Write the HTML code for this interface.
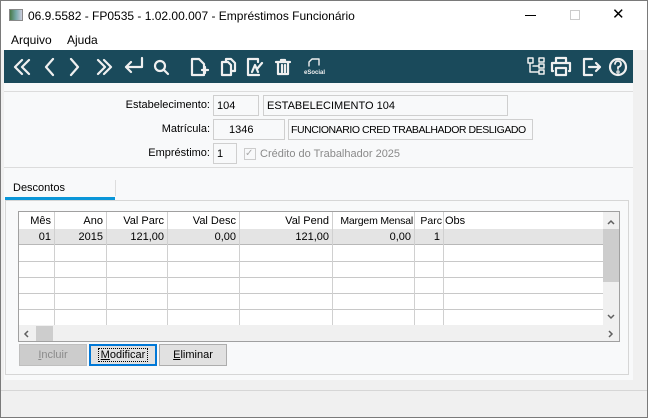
<!DOCTYPE html>
<html><head><meta charset="utf-8"><style>
*{margin:0;padding:0;box-sizing:border-box}
body{width:648px;height:418px;overflow:hidden;background:#f0f0f0;font-family:"Liberation Sans",sans-serif;font-size:12px;color:#000;position:relative}
.a{position:absolute;white-space:nowrap}
.win{left:0;top:0;width:648px;height:418px;border:1px solid #7a7a7a}
.inp{position:absolute;white-space:nowrap;overflow:hidden;background:#f8f9fa;border:1px solid #cfcfcf;height:21px;line-height:20px;padding-left:3px;font-size:11px}
.lbl{position:absolute;white-space:nowrap;text-align:right;font-size:11px;line-height:21px}
.cell{position:absolute;white-space:nowrap;font-size:11px;text-align:right;padding-right:3px}
.btn{position:absolute;top:344px;height:22px;width:68px;border:1px solid #adadad;background:#e1e1e1;text-align:center;line-height:20px;font-size:11px}
svg{position:absolute}
</style></head><body>
<div class="a" style="left:0;top:0;width:648px;height:30px;background:#fff"></div>
<div class="a" style="left:9px;top:9px;width:14px;height:12px;background:linear-gradient(90deg,#4a7a4a,#7aa,#ccd);border:1px solid #888"></div>
<div class="a" style="left:28px;top:9px;font-size:12px">06.9.5582 - FP0535 - 1.02.00.007 - Empréstimos Funcionário</div>
<div class="a" style="left:525px;top:15px;width:11px;height:1px;background:#000"></div>
<div class="a" style="left:570px;top:10px;width:10px;height:10px;border:1px solid #ccc"></div>
<div class="a" style="left:612px;top:5px;font-size:15px">✕</div>
<div class="a" style="left:0;top:30px;width:648px;height:20px;background:#fff"></div>
<div class="a" style="left:11px;top:33px">Arquivo</div>
<div class="a" style="left:67px;top:33px">Ajuda</div>
<div class="a" style="left:4px;top:50px;width:629px;height:33px;background:#1a4a5b"></div>
<svg width="648" height="83" style="left:0;top:0" fill="none" stroke="#f0f0f0" stroke-width="2.2" stroke-linecap="round" stroke-linejoin="round">
<path d="M22 60l-7 7 7 7M29 60l-7 7 7 7M53 59l-7 8 7 8M71 59l7 8-7 8M98 60l7 7-7 7M104 60l7 7-7 7M142 58v9h-16M131 62l-5 5 5 5"/>
<circle cx="160" cy="66" r="5"/><path d="M164 70l4 4"/>
<path d="M199 59h-7v16h12v-11l-5-5zM205 67v6M202 70h6"/>
<path d="M222 62h6l3 3v10h-9zM226 62v-3h5l4 4v8h-4"/>
<path d="M258 62v-3h-10v16h11M252 72l3-7 3 7M262 63l-5 6"/>
<path d="M276 62h14M281 62v-2h4v2M278 62v12h10v-12M282 65v7M285 65v7"/>
<path d="M309 66v-4l3-3h7v6" stroke-width="1.4"/>
<path d="M528 58h5v5h-5zM539 58h5v4h-5zM539 64h5v4h-5zM539 70h5v4h-5zM530 63v9h9M533 66h6" stroke-width="1.5"/>
<path d="M556 62v-4h10v4M553 71h-1v-8h18v8h-1M556 68h10v7h-10z"/>
<path d="M592 59h-8v16h8M589 67h11M596 63l4 4-4 4"/>
<circle cx="618" cy="67" r="8"/><path d="M615 64a3 3 0 1 1 3 3v2" stroke-width="1.8"/><circle cx="618" cy="72" r=".6"/>
</svg>
<div class="a" style="left:304px;top:70px;color:#f0f0f0;font-size:6px;font-weight:bold">eSocial</div>
<div class="a" style="left:4px;top:83px;width:629px;height:297px;background:#f8f9fa"></div>
<div class="a" style="left:4px;top:91px;width:629px;height:1px;background:#dcdcdc"></div>
<div class="a" style="left:4px;top:167px;width:629px;height:1px;background:#dcdcdc"></div>
<div class="lbl" style="left:100px;top:95px;width:110px">Estabelecimento:</div>
<div class="inp" style="left:213px;top:95px;width:46px">104</div>
<div class="inp" style="left:263px;top:95px;width:245px">ESTABELECIMENTO 104</div>
<div class="lbl" style="left:100px;top:119px;width:110px">Matrícula:</div>
<div class="inp" style="left:213px;top:119px;width:72px;padding-left:15px">1346</div>
<div class="inp" style="left:288px;top:119px;width:245px;font-size:10.5px;letter-spacing:-0.45px;padding-left:2px">FUNCIONARIO CRED TRABALHADOR DESLIGADO</div>
<div class="lbl" style="left:100px;top:143px;width:110px">Empréstimo:</div>
<div class="inp" style="left:213px;top:143px;width:24px">1</div>
<div class="a" style="left:244px;top:148px;width:12px;height:12px;border:1px solid #ccc;color:#aaa;font-size:10px;line-height:10px">✓</div>
<div class="a" style="left:260px;top:148px;color:#8a8a8a;font-size:11px">Crédito do Trabalhador 2025</div>
<div class="a" style="left:13px;top:182px;font-size:11px">Descontos</div>
<div class="a" style="left:115px;top:180px;width:1px;height:16px;background:#ddd"></div>
<div class="a" style="left:5px;top:197px;width:110px;height:3px;background:#0a96d8"></div>
<div class="a" style="left:5px;top:200px;width:624px;height:175px;border:1px solid #d6d6d6;background:#f8f9fa"></div>
<div class="a" style="left:18px;top:211px;width:602px;height:131px;border:1px solid #a0a0a0;background:#fff"></div>
<div class="a" style="left:19px;top:229px;width:584px;height:16px;background:#e4e4e4;border-bottom:1px solid #b8b8b8"></div>
<div class="a" style="left:19px;top:261px;width:584px;height:1px;background:#c8c8c8"></div>
<div class="a" style="left:19px;top:277px;width:584px;height:1px;background:#c8c8c8"></div>
<div class="a" style="left:19px;top:293px;width:584px;height:1px;background:#c8c8c8"></div>
<div class="a" style="left:19px;top:309px;width:584px;height:1px;background:#c8c8c8"></div>
<div class="a" style="left:54px;top:212px;width:1px;height:113px;background:#d0d0d0"></div>
<div class="a" style="left:106px;top:212px;width:1px;height:113px;background:#d0d0d0"></div>
<div class="a" style="left:167px;top:212px;width:1px;height:113px;background:#d0d0d0"></div>
<div class="a" style="left:239px;top:212px;width:1px;height:113px;background:#d0d0d0"></div>
<div class="a" style="left:332px;top:212px;width:1px;height:113px;background:#d0d0d0"></div>
<div class="a" style="left:414px;top:212px;width:1px;height:113px;background:#d0d0d0"></div>
<div class="a" style="left:443px;top:212px;width:1px;height:113px;background:#d0d0d0"></div>
<div class="cell" style="left:19px;top:215px;width:35px">Mês</div>
<div class="cell" style="left:55px;top:215px;width:51px">Ano</div>
<div class="cell" style="left:107px;top:215px;width:60px">Val Parc</div>
<div class="cell" style="left:168px;top:215px;width:71px">Val Desc</div>
<div class="cell" style="left:240px;top:215px;width:92px">Val Pend</div>
<div class="cell" style="left:333px;top:215px;width:81px;padding-right:1px;font-size:10.5px;letter-spacing:-0.2px">Margem Mensal</div>
<div class="cell" style="left:415px;top:215px;width:28px;padding-right:1px;font-size:10.5px">Parc</div>
<div class="a" style="left:445px;top:215px;font-size:11px">Obs</div>
<div class="cell" style="left:19px;top:231px;width:35px">01</div>
<div class="cell" style="left:55px;top:231px;width:51px">2015</div>
<div class="cell" style="left:107px;top:231px;width:60px">121,00</div>
<div class="cell" style="left:168px;top:231px;width:71px">0,00</div>
<div class="cell" style="left:240px;top:231px;width:92px">121,00</div>
<div class="cell" style="left:333px;top:231px;width:81px">0,00</div>
<div class="cell" style="left:415px;top:231px;width:28px">1</div>
<div class="a" style="left:603px;top:212px;width:16px;height:113px;background:#f0f0f0"></div>
<div class="a" style="left:603px;top:229px;width:16px;height:53px;background:#cdcdcd"></div>
<div class="a" style="left:19px;top:325px;width:600px;height:16px;background:#f0f0f0"></div>
<div class="a" style="left:36px;top:326px;width:17px;height:15px;background:#cdcdcd"></div>
<svg width="648" height="418" style="left:0;top:0" fill="none" stroke="#606060" stroke-width="1.5"><path d="M608 224l3-3 3 3M608 315l3 3 3-3M28 331l-3 3 3 3M609 331l3 3-3 3"/></svg>
<div class="btn" style="left:19px;color:#8a8a8a;background:#cccccc;border-color:#bfbfbf"><u>I</u>ncluir</div>
<div class="btn" style="left:89px;border:2px solid #0078d7;line-height:18px"><span style="outline:1px dotted #000;padding:0 2px"><u>M</u>odificar</span></div>
<div class="btn" style="left:159px"><u>E</u>liminar</div>
<div class="a" style="left:633px;top:83px;width:14px;height:297px;background:#f0f0f0"></div>
<div class="a" style="left:1px;top:390px;width:646px;height:1px;background:#d6d6d6"></div>
<div class="a win"></div>
</body></html>
